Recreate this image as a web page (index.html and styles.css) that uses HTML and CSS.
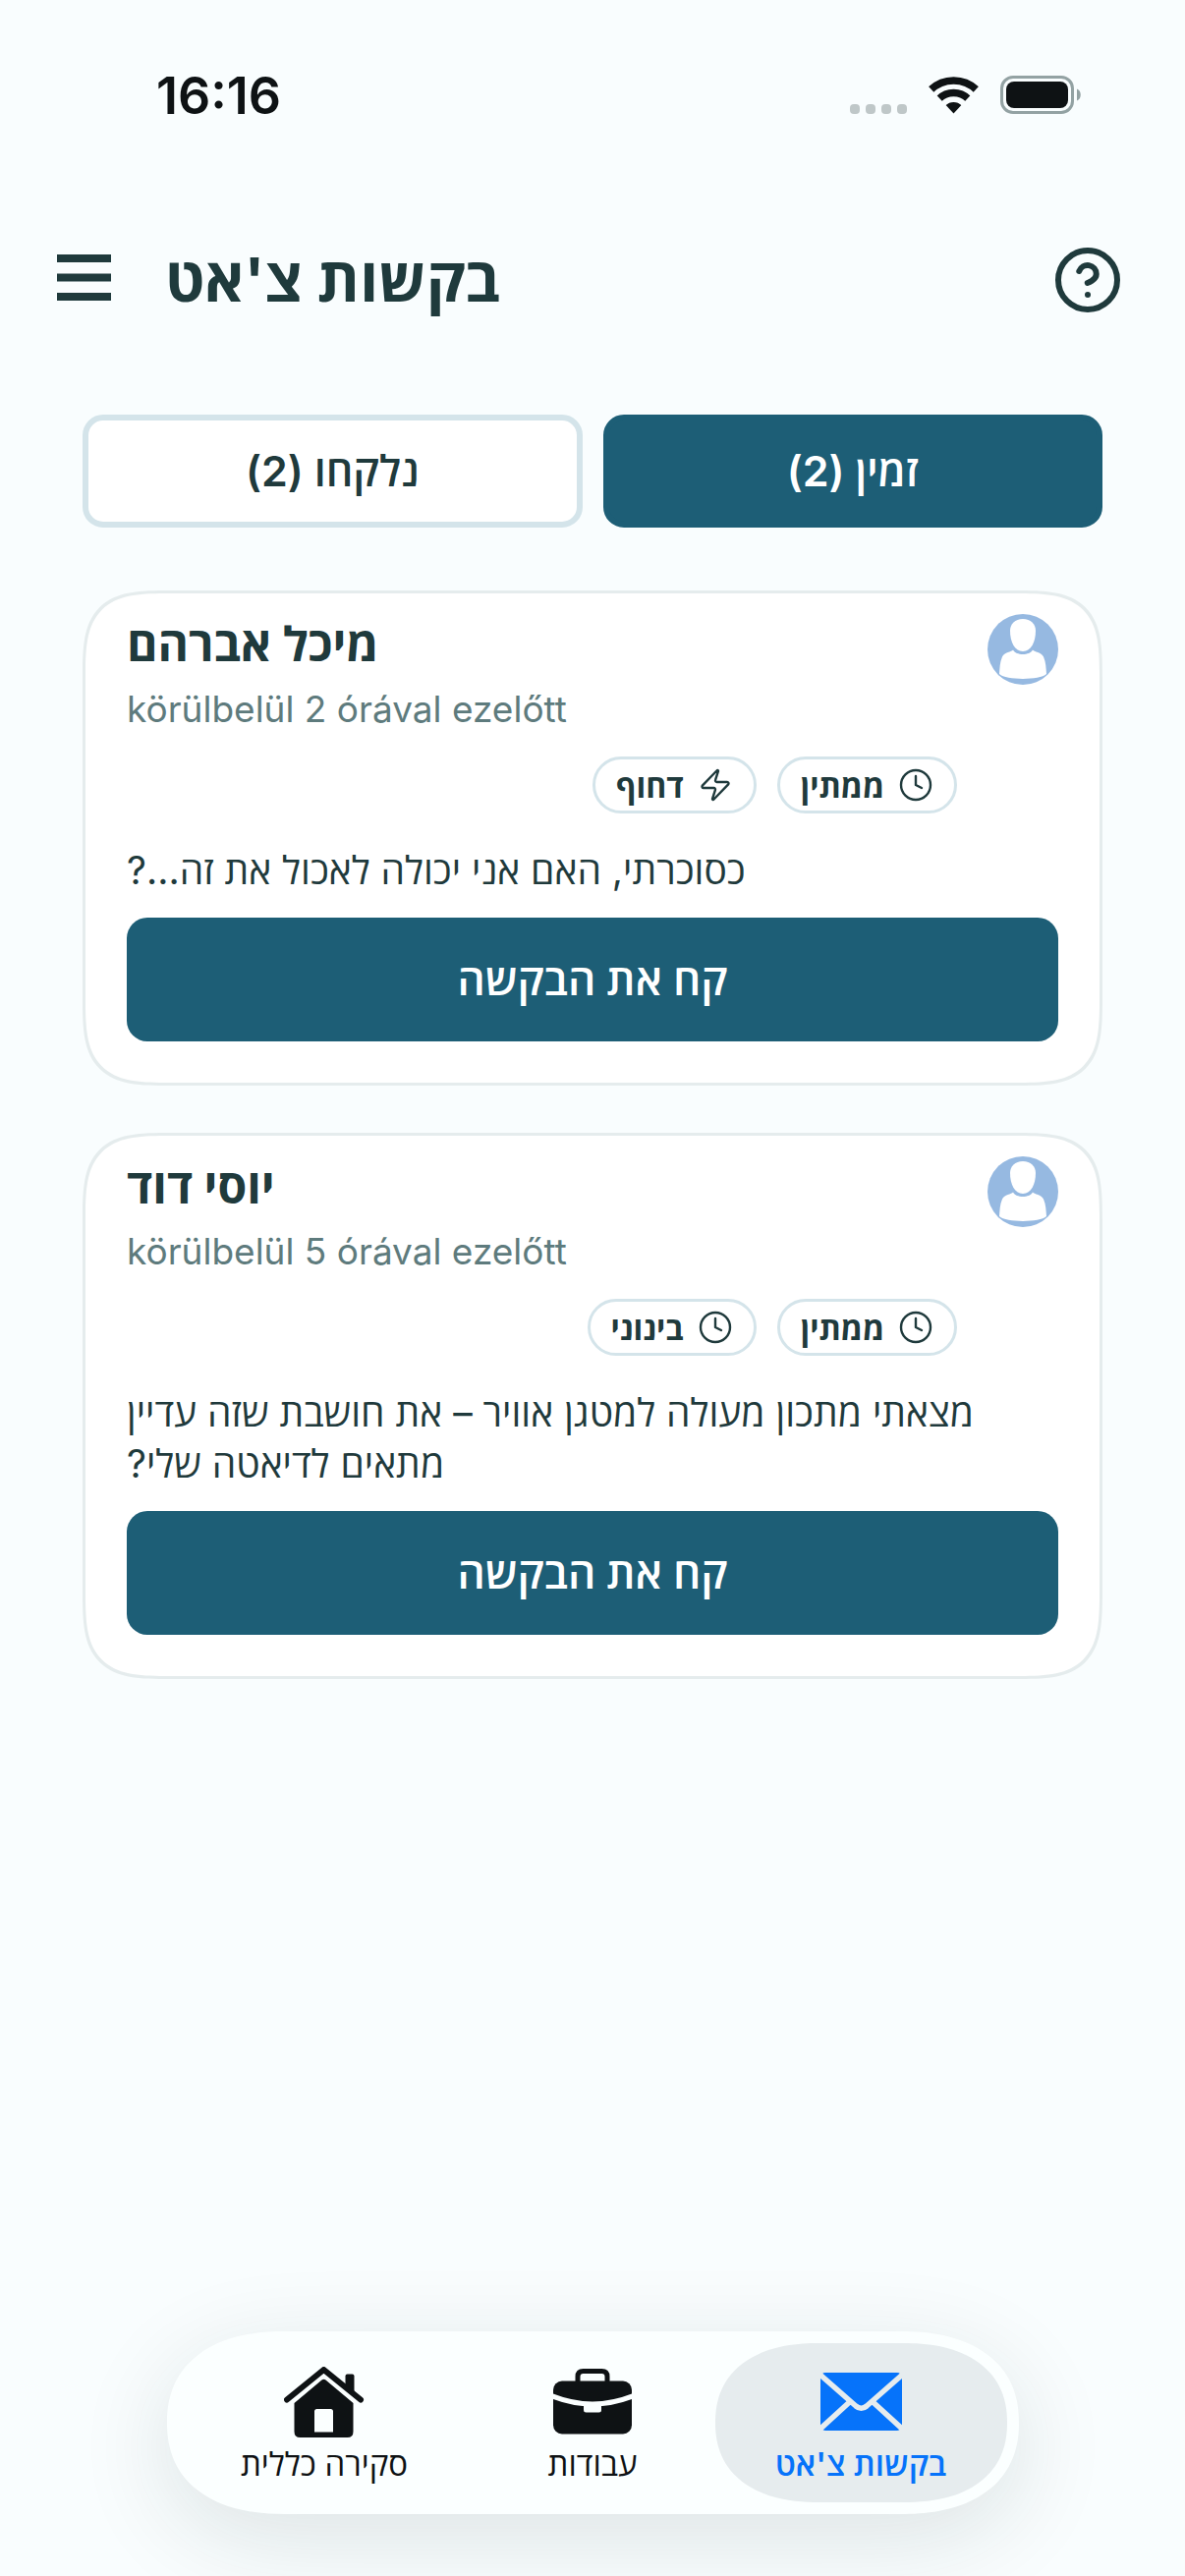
FILE: index.html
```html
<!DOCTYPE html>
<html lang="he">
<head>
<meta charset="utf-8">
<meta name="viewport" content="width=device-width, initial-scale=1">
<title>בקשות צ'אט</title>
<link rel="stylesheet" href="styles.css">
</head>
<body>
<svg class="sprite" aria-hidden="true">
  <symbol id="clock" viewBox="0 0 24 24"><circle cx="12" cy="12" r="10"/><path d="M12 6v6l4 2"/></symbol>
  <symbol id="bolt" viewBox="0 0 24 24"><path d="M4 14a1 1 0 0 1-.78-1.63l9.9-10.2a.5.5 0 0 1 .86.46l-1.92 6.02A1 1 0 0 0 13 10h7a1 1 0 0 1 .78 1.63l-9.9 10.2a.5.5 0 0 1-.86-.46l1.92-6.02A1 1 0 0 0 11 14z"/></symbol>
  <symbol id="person" viewBox="0 0 72 72">
    <circle cx="36" cy="36" r="36" fill="#96b9e1"/>
    <path fill="#fff" d="M36 5C44 5 49 10 49 17C49 28 44.500 38 36 38C27.500 38 23 28 23 17C23 10 28 5 36 5Z"/>
    <path fill="#fff" d="M26 36.500C29 42.500 43 42.500 46 36.500C47.500 38.500 55 39 57 43.500C59.500 49 59.500 55 60 61C53 67.500 19 67.500 12 61C12.500 55 12.500 49 15 43.500C17 39 24.500 38.500 26 36.500Z"/>
  </symbol>
</svg>

<div class="status">
  <time>16:16</time>
  <div class="status-icons" aria-hidden="true">
    <svg width="58" height="10" viewBox="0 0 58 10" fill="#bfc7c8"><rect width="10" height="10" rx="4"/><rect x="16" width="10" height="10" rx="4"/><rect x="32" width="10" height="10" rx="4"/><rect x="48" width="10" height="10" rx="4"/></svg>
    <svg class="wifi" width="51" height="38" viewBox="0 0 51 38">
      <clipPath id="fan"><path d="M25.500 37.500L-12 -3H63Z"/></clipPath>
      <g clip-path="url(#fan)"><circle cx="25.500" cy="37.500" r="33.500" fill="none" stroke="#0e1214" stroke-width="7.500"/><circle cx="25.500" cy="37.500" r="21" fill="none" stroke="#0e1214" stroke-width="7.500"/><circle cx="25.500" cy="37.500" r="11.500" fill="#0e1214"/></g>
    </svg>
    <svg width="83" height="39" viewBox="0 0 83 39"><rect x="1.500" y="1.500" width="72" height="36" rx="11.500" fill="none" stroke="#93a2a3" stroke-width="3"/><rect x="6" y="6" width="63" height="27" rx="8" fill="#0e1214"/><path d="M78 13.500C83 15 83 24 78 25.500Z" fill="#93a2a3"/></svg>
  </div>
</div>

<header class="topbar">
  <button class="icon-btn" aria-label="תפריט"><svg width="55" height="52" viewBox="0 0 55 52" fill="#1f3a3c"><rect width="55" height="8"/><rect y="19.500" width="55" height="8"/><rect y="39" width="55" height="8"/></svg></button>
  <h1 dir="rtl">בקשות צ'אט</h1>
  <button class="icon-btn help" aria-label="עזרה"><svg class="line" width="72" height="72" viewBox="0 0 24 24" stroke-width="2"><circle cx="12" cy="12" r="10"/><path d="M9.090 9a3 3 0 0 1 5.830 1c0 2-3 3-3 3M12 17h.01"/></svg></button>
</header>

<main>
  <div class="tabs">
    <button class="tab" dir="rtl">נלקחו (2)</button>
    <button class="tab tab-on" dir="rtl">זמין (2)</button>
  </div>

  <article class="card">
    <div class="card-head">
      <div>
        <h2 dir="rtl">מיכל אברהם</h2>
        <p class="ago" lang="hu">körülbelül 2 órával ezelőtt</p>
      </div>
      <svg class="avatar"><use href="#person"/></svg>
    </div>
    <div class="badges" dir="rtl">
      <span class="badge"><svg class="line"><use href="#clock"/></svg>ממתין</span>
      <span class="badge"><svg class="line"><use href="#bolt"/></svg>דחוף</span>
    </div>
    <p class="message" dir="rtl">כסוכרתי, האם אני יכולה לאכול את זה...?</p>
    <button class="take" dir="rtl">קח את הבקשה</button>
  </article>

  <article class="card">
    <div class="card-head">
      <div>
        <h2 dir="rtl">יוסי דוד</h2>
        <p class="ago" lang="hu">körülbelül 5 órával ezelőtt</p>
      </div>
      <svg class="avatar"><use href="#person"/></svg>
    </div>
    <div class="badges" dir="rtl">
      <span class="badge"><svg class="line"><use href="#clock"/></svg>ממתין</span>
      <span class="badge"><svg class="line"><use href="#clock"/></svg>בינוני</span>
    </div>
    <p class="message" dir="rtl">מצאתי מתכון מעולה למטגן אוויר – את חושבת שזה עדיין מתאים לדיאטה שלי?</p>
    <button class="take" dir="rtl">קח את הבקשה</button>
  </article>
</main>

<nav class="dock">
  <a href="#overview" class="dock-item">
    <svg width="82" height="72" viewBox="0 0 82 72" fill="#0e1214"><path d="M3 33.500L40.500 3L78 33.500" fill="none" stroke="#0e1214" stroke-width="6" stroke-linecap="round" stroke-linejoin="round"/><path d="M62.500 22V9.500a2 2 0 0 1 2-2H69.500a2 2 0 0 1 2 2V29Z"/><path fill-rule="evenodd" d="M10.500 37L38.500 13.500Q40.500 12 42.500 13.500L70.500 37V66Q70.500 72 64.500 72H16.500Q10.500 72 10.500 66ZM33.500 43Q31 43 31 45.500V66.500H50V45.500Q50 43 47.500 43Z"/></svg>
    <span dir="rtl">סקירה כללית</span>
  </a>
  <a href="#jobs" class="dock-item">
    <svg width="80" height="72" viewBox="0 -2 80 72"><path d="M25 14V8Q25 2.500 30.500 2.500H49.500Q55 2.500 55 8V14" fill="none" stroke="#0e1214" stroke-width="5"/><rect y="12.500" width="80" height="54" rx="9" fill="#0e1214"/><path d="M-2 27.500Q40 44.500 82 27.500" fill="none" stroke="#fbffff" stroke-width="5"/><path d="M31 36H49V42Q49 44.500 46.500 44.500H33.500Q31 44.500 31 42Z" fill="#fbffff"/></svg>
    <span dir="rtl">עבודות</span>
  </a>
  <a href="#chats" class="dock-item dock-on" aria-current="page">
    <svg width="83" height="72" viewBox="0 -6 83 72"><rect width="83" height="59" rx="5" fill="#0673fa"/><path d="M-1 1.500L36 34Q41.500 38.500 47 34L84 1.500M-1 58L29 30.500M84 58L54 30.500" fill="none" stroke="#e6ecee" stroke-width="5.500"/></svg>
    <span dir="rtl">בקשות צ'אט</span>
  </a>
</nav>
</body>
</html>
```

FILE: styles.css
```css
* { box-sizing: border-box; margin: 0; padding: 0; }

body {
  min-height: 100vh;
  display: flex;
  flex-direction: column;
  background: #f9fdfe;
  color: #1f3a3c;
  font-family: Inter, "Open Sans", sans-serif;
}

button { font: inherit; border: 0; background: none; color: inherit; }
svg { display: block; flex: none; }
.sprite { position: absolute; width: 0; height: 0; }
.line { fill: none; stroke: #1f3a3c; stroke-linecap: round; stroke-linejoin: round; }

.status {
  display: flex;
  justify-content: space-between;
  align-items: center;
  height: 132px;
  padding: 64px 105px 4px 159px;
  color: #0e1214;
  font-size: 52px;
  font-weight: 600;
  line-height: 64px;
}
.status time { padding-top: 4px; }
.status-icons { display: flex; align-items: flex-end; gap: 22px; }

.topbar {
  display: flex;
  align-items: center;
  gap: 55px;
  margin-top: 117px;
  padding: 0 63px 0 58px;
}
h1 { font-size: 62px; font-weight: 700; line-height: 72px; }
.help { margin-left: auto; }

main { padding: 101px 84px 96px; }

.tabs { display: grid; grid-template-columns: 1fr 1fr; gap: 21px; margin-bottom: 64px; }
.tab {
  height: 115px;
  padding-bottom: 2px;
  border: 6px solid #d4e4ea;
  border-radius: 21px;
  background: #fff;
  font-size: 43px;
  font-weight: 600;
}
.tab-on { border-color: #1d5e76; background: #1d5e76; color: #fff; }

.card {
  padding: 21px 42px 42px;
  border: 3px solid #e5eced;
  border-radius: 60px;
  background: #fff;
}
.card + .card { margin-top: 48px; }
@supports (corner-shape: superellipse(2)) {
  .card { border-radius: 90px; corner-shape: superellipse(1.7); }
}
.card-head { display: flex; justify-content: space-between; align-items: flex-start; }
h2 { font-size: 48px; font-weight: 700; line-height: 62px; text-align: left; }
.ago { font-size: 37px; line-height: 70px; color: #5e7b7d; }
.avatar { width: 72px; height: 72px; }

.badges { display: flex; gap: 21px; margin-top: 13px; padding-right: 103px; }
.badge {
  display: flex;
  align-items: center;
  gap: 14px;
  height: 58px;
  padding: 0 21px;
  border: 3px solid #d4e4ea;
  border-radius: 29px;
  font-size: 32px;
  font-weight: 700;
}
.badge svg { width: 36px; height: 36px; stroke-width: 1.6; }

.message { margin: 32px 0 22px; font-size: 39px; line-height: 52px; text-align: left; }
.take {
  width: 100%;
  height: 126px;
  padding-bottom: 3px;
  border-radius: 21px;
  background: #1d5e76;
  color: #fff;
  font-size: 44px;
  font-weight: 600;
}

.dock {
  display: flex;
  align-self: center;
  margin: auto 0 63px;
  padding: 12px;
  border-radius: 93px;
  background: #fbffff;
  box-shadow: 0 24px 96px rgba(20, 40, 40, 0.12);
}
.dock-item {
  width: 297px;
  height: 162px;
  padding-top: 24px;
  border-radius: 81px;
  display: flex;
  flex-direction: column;
  align-items: center;
  gap: 6px;
  color: #0e1214;
  font-size: 33px;
  font-weight: 500;
  line-height: 42px;
  text-decoration: none;
}
.dock-item + .dock-item { margin-left: -24px; }
.dock-on { background: #e6ecee; color: #0673fa; font-weight: 600; }
@supports (corner-shape: superellipse(2)) {
  .dock { border-radius: 120px / 93px; corner-shape: superellipse(1.2); }
  .dock-item { border-radius: 105px / 81px; corner-shape: superellipse(1.2); }
}
```
